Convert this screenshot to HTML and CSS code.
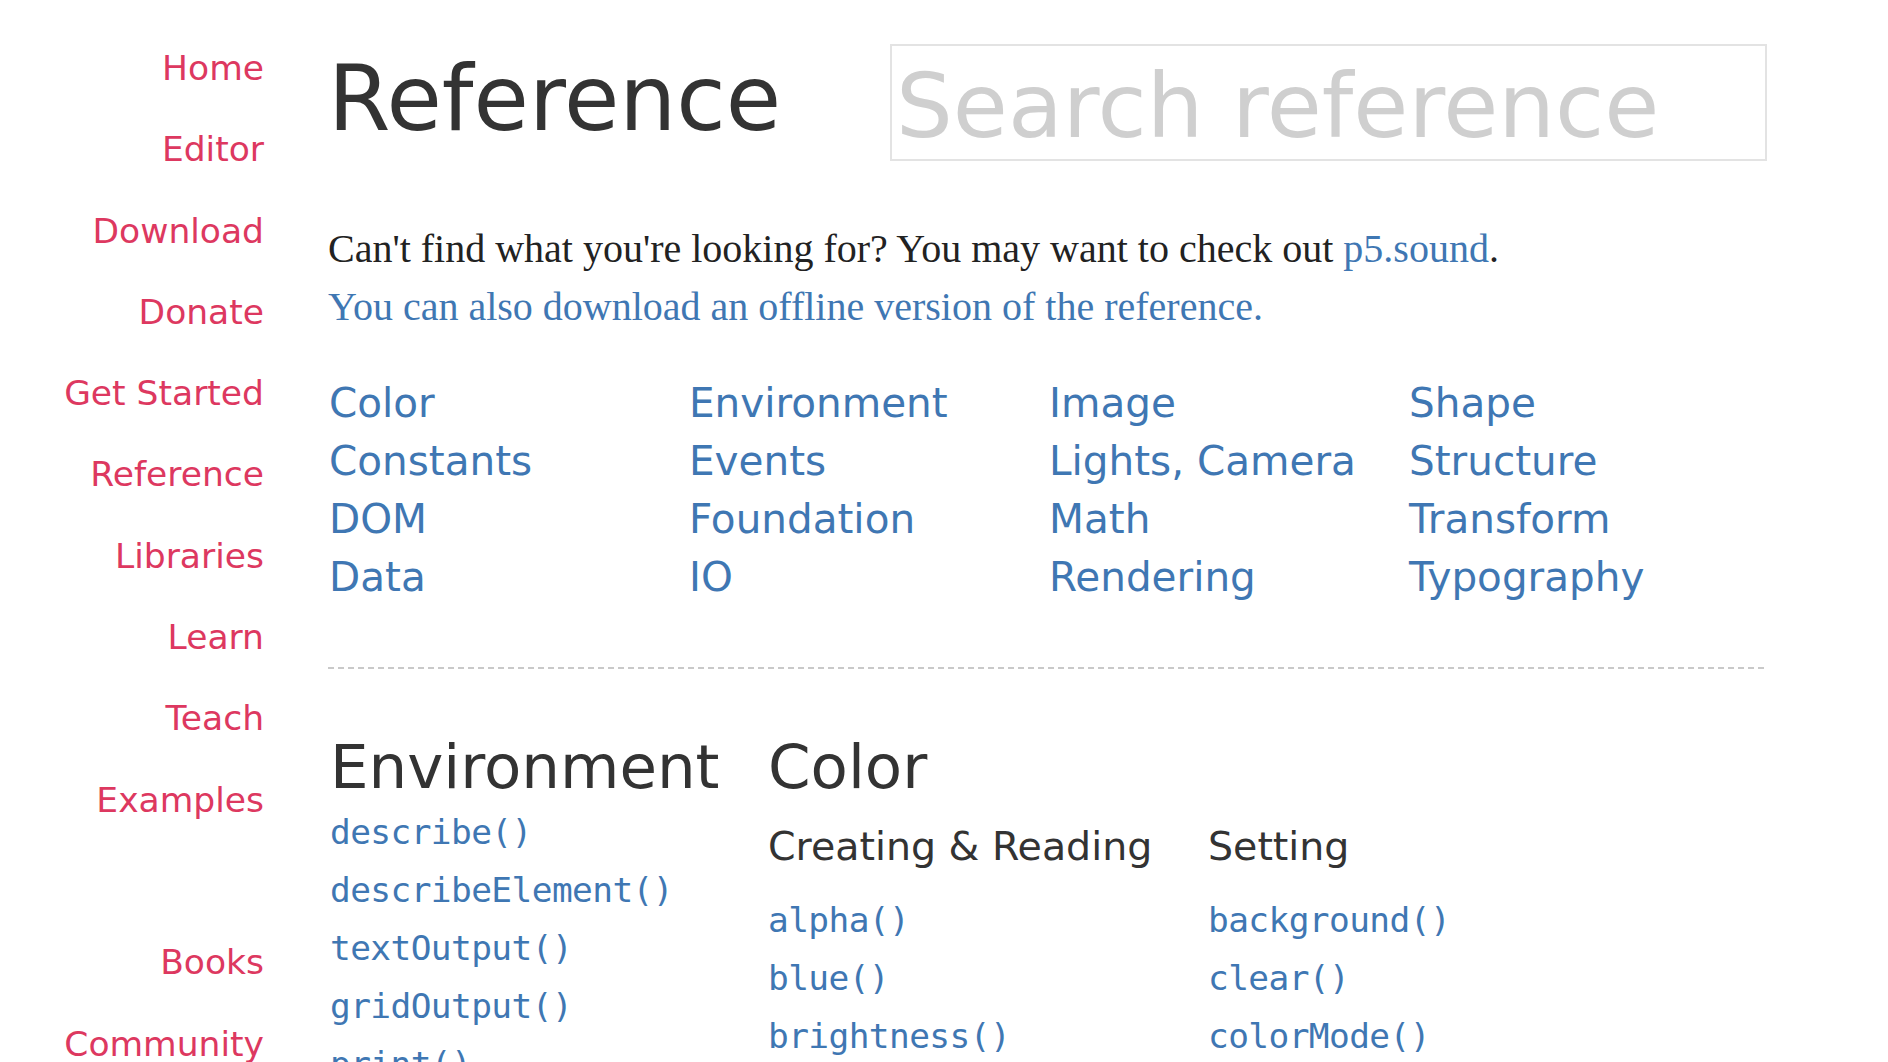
FILE: index.html
```html
<!DOCTYPE html>
<html lang="en">
<head>
<meta charset="utf-8">
<title>p5.js Reference</title>
<link rel="stylesheet" href="styles.css">
</head>
<body>
<div class="page">
  <nav class="sidenav">
    <ul>
      <li><a href="#">Home</a></li>
      <li><a href="#">Editor</a></li>
      <li><a href="#">Download</a></li>
      <li><a href="#">Donate</a></li>
      <li><a href="#">Get Started</a></li>
      <li><a href="#">Reference</a></li>
      <li><a href="#">Libraries</a></li>
      <li><a href="#">Learn</a></li>
      <li><a href="#">Teach</a></li>
      <li><a href="#">Examples</a></li>
      <li class="spacer"></li>
      <li><a href="#">Books</a></li>
      <li><a href="#">Community</a></li>
    </ul>
  </nav>
  <main class="content">
    <header class="head">
      <h1 class="title">Reference</h1>
      <input class="search" type="text" placeholder="Search reference">
    </header>
    <p class="intro">Can't find what you're looking for? You may want to check out <a href="#">p5.sound</a>.<br><a href="#">You can also download an offline version of the reference.</a></p>
    <ul class="cats">
      <li><a href="#">Color</a></li>
      <li><a href="#">Constants</a></li>
      <li><a href="#">DOM</a></li>
      <li><a href="#">Data</a></li>
      <li><a href="#">Environment</a></li>
      <li><a href="#">Events</a></li>
      <li><a href="#">Foundation</a></li>
      <li><a href="#">IO</a></li>
      <li><a href="#">Image</a></li>
      <li><a href="#">Lights, Camera</a></li>
      <li><a href="#">Math</a></li>
      <li><a href="#">Rendering</a></li>
      <li><a href="#">Shape</a></li>
      <li><a href="#">Structure</a></li>
      <li><a href="#">Transform</a></li>
      <li><a href="#">Typography</a></li>
    </ul>
    <div class="rule"></div>
    <div class="sections">
      <section class="sec env">
        <h2 class="sec-title">Environment</h2>
        <ul class="fns">
          <li><a href="#">describe()</a></li>
          <li><a href="#">describeElement()</a></li>
          <li><a href="#">textOutput()</a></li>
          <li><a href="#">gridOutput()</a></li>
          <li><a href="#">print()</a></li>
          <li><a href="#">frameCount</a></li>
        </ul>
      </section>
      <section class="sec color">
        <h2 class="sec-title">Color</h2>
        <div class="subcols">
          <div class="subcol">
            <h3 class="sub-title">Creating &amp; Reading</h3>
            <ul class="fns">
              <li><a href="#">alpha()</a></li>
              <li><a href="#">blue()</a></li>
              <li><a href="#">brightness()</a></li>
              <li><a href="#">color()</a></li>
            </ul>
          </div>
          <div class="subcol">
            <h3 class="sub-title">Setting</h3>
            <ul class="fns">
              <li><a href="#">background()</a></li>
              <li><a href="#">clear()</a></li>
              <li><a href="#">colorMode()</a></li>
              <li><a href="#">fill()</a></li>
            </ul>
          </div>
        </div>
      </section>
    </div>
  </main>
</div>
</body>
</html>
```

FILE: styles.css
```css
html, body {
  margin: 0;
  padding: 0;
  background: #fff;
}

body {
  font-family: "DejaVu Sans", sans-serif;
  color: #333;
  overflow: hidden;
}

a {
  text-decoration: none;
}

ul {
  list-style: none;
  margin: 0;
  padding: 0;
}

.page {
  display: flex;
  gap: 64px;
}

.sidenav {
  width: 264px;
  flex: none;
  padding-top: 28px;
}

.sidenav li {
  height: 81.3px;
  line-height: 81.3px;
  text-align: right;
  font-size: 34.5px;
  white-space: nowrap;
}

.sidenav a {
  color: #dd3860;
}

.content {
  width: 1440px;
  flex: none;
}

.head {
  display: flex;
  align-items: center;
  margin-top: 44px;
}

.title {
  width: 562px;
  flex: none;
  margin: 0;
  padding-bottom: 8px;
  font-size: 90px;
  font-weight: normal;
  line-height: 109px;
  color: #333;
}

.search {
  width: 877px;
  height: 117px;
  box-sizing: border-box;
  border: 2px solid #e3e3e3;
  padding: 6px 0 0 4px;
  font-family: "DejaVu Sans", sans-serif;
  font-size: 89.5px;
  color: #333;
  outline: none;
  background: #fff;
}

.search::placeholder {
  color: #cfcfcf;
}

.intro {
  margin: 59px 0 0;
  font-family: "Liberation Serif", serif;
  font-size: 40px;
  line-height: 58px;
  color: #222;
}

.intro a {
  color: #3f77b3;
}

.cats {
  margin-top: 38px;
  display: grid;
  grid-template-columns: repeat(4, 360px);
  grid-template-rows: repeat(4, 58px);
  grid-auto-flow: column;
  padding-left: 1px;
}

.cats li {
  font-size: 40.5px;
  line-height: 58px;
  white-space: nowrap;
}

.cats a {
  color: #3f77b3;
}

.rule {
  margin-top: 61px;
  height: 2px;
  background: repeating-linear-gradient(to right, #c9c9c9 0 6px, transparent 6px 10px);
}

.sections {
  display: flex;
  margin-top: 63px;
  padding-left: 2px;
}

.sec-title {
  margin: 0;
  font-size: 61px;
  font-weight: normal;
  line-height: 70px;
  color: #333;
}

.env {
  width: 438px;
  flex: none;
}

.fns li {
  font-family: "DejaVu Sans Mono", monospace;
  font-size: 34.5px;
  letter-spacing: -0.6px;
  line-height: 58px;
  white-space: nowrap;
}

.fns a {
  color: #3f77b3;
}

.env .fns {
  margin-top: 1px;
}

.subcols {
  display: flex;
}

.subcol {
  width: 440px;
  flex: none;
}

.sub-title {
  margin: 15px 0 16px;
  font-size: 39.5px;
  font-weight: normal;
  line-height: 58px;
  color: #333;
}
```
